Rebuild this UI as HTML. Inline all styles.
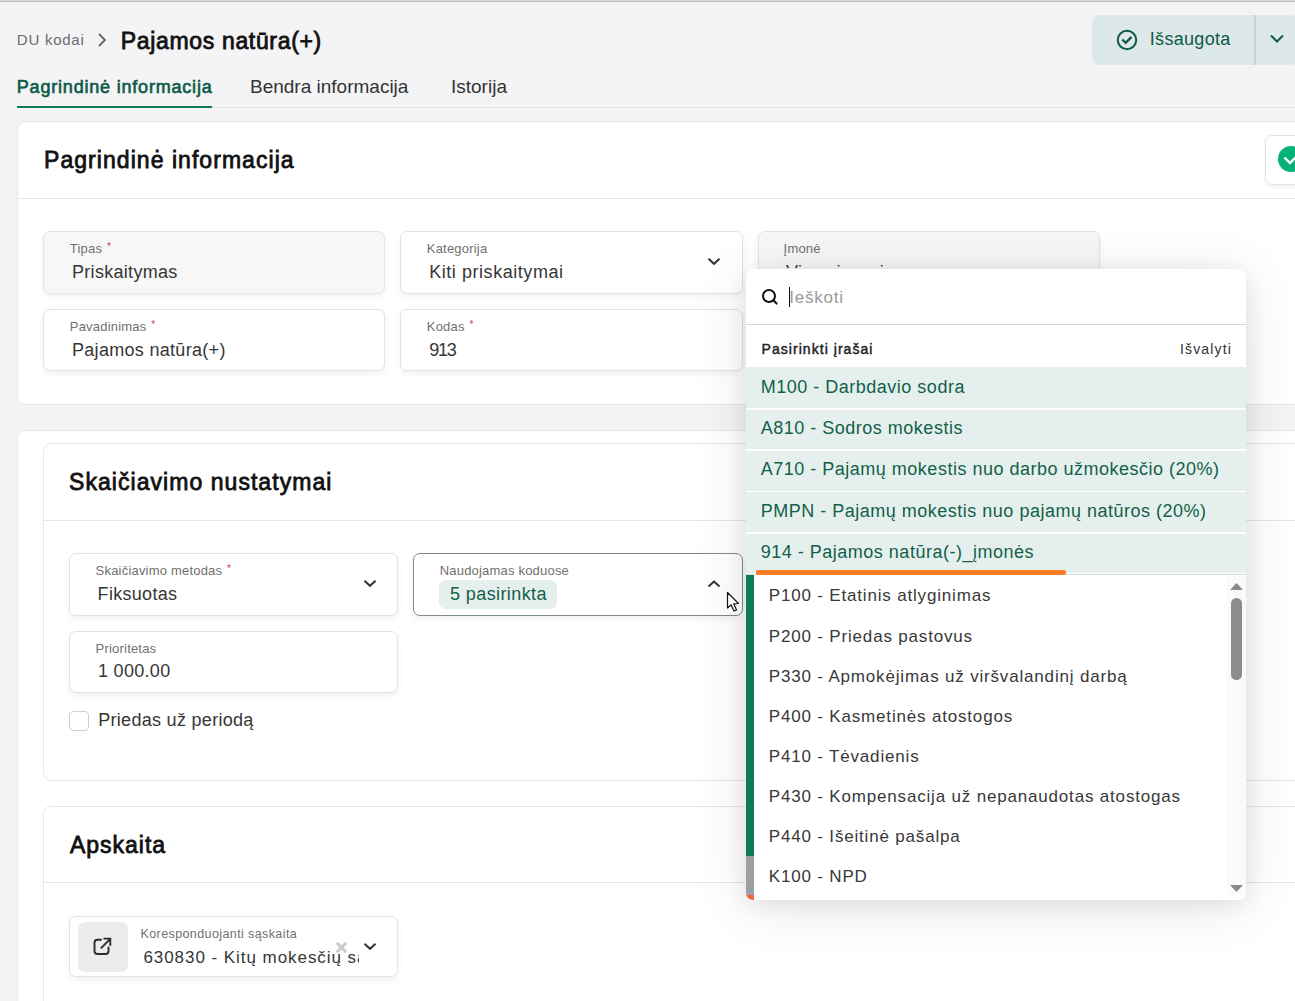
<!DOCTYPE html>
<html><head><meta charset="utf-8">
<style>
*{box-sizing:border-box;margin:0;padding:0}
html,body{width:1295px;height:1001px;overflow:hidden}
body{background:#f4f4f6;font-family:"Liberation Sans",sans-serif;position:relative;color:#2d2d2d}
.a{position:absolute}
.t{position:absolute;white-space:nowrap;line-height:1}
.card{position:absolute;background:#fff;border:1px solid #e7e7ea;border-radius:8px}
.hr{position:absolute;height:1px;background:#e7e7ea}
.fld{position:absolute;background:#fff;border:1px solid #e3e3e3;border-radius:7px;box-shadow:0 3px 6px rgba(0,0,0,0.06)}
.fld.dis{background:#f7f7f7}
.lbl{font-size:13px;color:#707070;letter-spacing:0.2px}
.val{font-size:18px;color:#363636;letter-spacing:0.3px}
.req{color:#e0325a;font-size:10px;position:relative;top:-3px;left:1px}
.ttl{font-size:23px;color:#111;-webkit-text-stroke:0.8px #111}
.sel{position:absolute;left:746px;width:500px;height:40px;background:#e5f0ee}
.selt{font-size:18px;color:#135f48;letter-spacing:0.5px}
.it{font-size:17px;color:#383838;letter-spacing:0.82px}
</style></head><body>
<!-- top line -->
<div class="a" style="left:0;top:0;width:1295px;height:1px;background:#dcdcde"></div>
<div class="a" style="left:0;top:1px;width:1295px;height:1px;background:#bdbdbf"></div>

<!-- breadcrumb -->
<div class="t" style="left:16.8px;top:32.3px;font-size:15px;color:#6b6b6b;letter-spacing:0.75px">DU kodai</div>
<svg class="a" style="left:96px;top:32px" width="12" height="16" viewBox="0 0 12 16"><path d="M3 2 L9 8 L3 14" fill="none" stroke="#666" stroke-width="1.8"/></svg>
<div class="t ttl" style="left:120.8px;top:30px;letter-spacing:0.66px">Pajamos natūra(+)</div>

<!-- save button -->
<div class="a" style="left:1092px;top:15px;width:206px;height:50px;background:#dde9e8;border-radius:7px"></div>
<div class="a" style="left:1254px;top:15px;width:2px;height:50px;background:#c3d8d2"></div>
<svg class="a" style="left:1116px;top:29px" width="22" height="22" viewBox="0 0 22 22"><circle cx="11" cy="11" r="9.2" fill="none" stroke="#0e5a45" stroke-width="2"/><path d="M6.3 10.5 L9.7 13.9 L15.5 7.9" fill="none" stroke="#0e5a45" stroke-width="2.3"/></svg>
<div class="t" style="left:1149.8px;top:30.1px;font-size:18px;color:#0e5a45;letter-spacing:0.3px">Išsaugota</div>
<svg class="a" style="left:1269px;top:33px" width="16" height="12" viewBox="0 0 16 12"><path d="M2 2.5 L8 8.5 L14 2.5" fill="none" stroke="#0e5a45" stroke-width="2"/></svg>

<!-- tabs -->
<div class="a" style="left:17px;top:107px;width:1278px;height:1px;background:#e2e2e4"></div>
<div class="t" style="left:16.8px;top:77.6px;font-size:18px;color:#0f5b48;-webkit-text-stroke:0.65px #0f5b48;letter-spacing:0.8px">Pagrindinė informacija</div>
<div class="a" style="left:17px;top:106px;width:195px;height:2px;background:#137a5a"></div>
<div class="t" style="left:250px;top:77px;font-size:19px;color:#333">Bendra informacija</div>
<div class="t" style="left:451px;top:77px;font-size:19px;color:#333">Istorija</div>

<!-- card 1 -->
<div class="card" style="left:17px;top:121px;width:1300px;height:284px"></div>
<div class="t ttl" style="left:44px;top:149.1px;letter-spacing:1.05px">Pagrindinė informacija</div>
<div class="hr" style="left:18px;top:198px;width:1277px"></div>
<div class="a" style="left:1265px;top:135px;width:40px;height:50px;border:1px solid #e3e3e3;border-radius:7px;background:#fff;box-shadow:0 2px 4px rgba(0,0,0,0.05)"></div>
<svg class="a" style="left:1278px;top:146px" width="26" height="26" viewBox="0 0 26 26"><circle cx="13" cy="13" r="13" fill="#05b174"/><path d="M6.5 11.5 L12 17 L18 11" fill="none" stroke="#fff" stroke-width="2.4"/></svg>

<div class="fld dis" style="left:43px;top:231px;width:342px;height:63px"></div>
<div class="t lbl" style="left:69.8px;top:242.3px">Tipas <span class="req">*</span></div>
<div class="t val" style="left:72px;top:263.1px">Priskaitymas</div>

<div class="fld" style="left:400px;top:231px;width:343px;height:63px"></div>
<div class="t lbl" style="left:426.8px;top:242.3px">Kategorija</div>
<div class="t val" style="left:429.2px;top:263.1px;letter-spacing:0.55px">Kiti priskaitymai</div>
<svg class="a" style="left:706px;top:255px" width="16" height="12" viewBox="0 0 16 12"><path d="M2.5 3.8 L8 8.8 L13.5 3.8" fill="none" stroke="#333" stroke-width="2"/></svg>

<div class="fld dis" style="left:758px;top:231px;width:342px;height:63px"></div>
<div class="t lbl" style="left:783.6px;top:242.3px">Įmonė</div>
<div class="a" style="left:780px;top:255px;width:200px;height:13.2px;overflow:hidden"><div class="t val" style="left:6px;top:8.1px">Visos įmonės</div></div>

<div class="fld" style="left:43px;top:309px;width:342px;height:62px"></div>
<div class="t lbl" style="left:69.8px;top:320.3px">Pavadinimas <span class="req">*</span></div>
<div class="t val" style="left:72px;top:341.1px">Pajamos natūra(+)</div>

<div class="fld" style="left:400px;top:309px;width:343px;height:62px"></div>
<div class="t lbl" style="left:426.8px;top:320.3px">Kodas <span class="req">*</span></div>
<div class="t val" style="left:429.2px;top:341.1px;letter-spacing:-1.2px">913</div>

<!-- card 2 -->
<div class="card" style="left:17px;top:430px;width:1300px;height:700px"></div>
<div class="card" style="left:43px;top:443px;width:1300px;height:338px"></div>
<div class="t ttl" style="left:69px;top:470.5px;letter-spacing:1.05px">Skaičiavimo nustatymai</div>
<div class="hr" style="left:44px;top:520px;width:1251px"></div>

<div class="fld" style="left:69px;top:553px;width:329px;height:63px"></div>
<div class="t lbl" style="left:95.6px;top:563.7px">Skaičiavimo metodas <span class="req">*</span></div>
<div class="t val" style="left:97.6px;top:584.8px">Fiksuotas</div>
<svg class="a" style="left:362px;top:577px" width="16" height="12" viewBox="0 0 16 12"><path d="M2.5 3.8 L8 8.8 L13.5 3.8" fill="none" stroke="#333" stroke-width="2"/></svg>

<div class="fld" style="left:413px;top:553px;width:330px;height:63px;border-color:#7d8b90"></div>
<div class="t lbl" style="left:439.7px;top:563.7px">Naudojamas koduose</div>
<div class="a" style="left:439px;top:580px;width:118px;height:29px;background:#e5f0ee;border-radius:7px"></div>
<div class="t val" style="left:450px;top:584.6px;color:#135f48;letter-spacing:0.4px">5 pasirinkta</div>
<svg class="a" style="left:706px;top:578px" width="16" height="12" viewBox="0 0 16 12"><path d="M2.5 8.6 L8 3.6 L13.5 8.6" fill="none" stroke="#333" stroke-width="2"/></svg>

<div class="fld" style="left:69px;top:631px;width:329px;height:62px"></div>
<div class="t lbl" style="left:95.6px;top:641.9px">Prioritetas</div>
<div class="t val" style="left:98px;top:662.2px">1 000.00</div>

<div class="a" style="left:69px;top:711px;width:20px;height:20px;border:1px solid #d0d0d0;border-radius:4px;background:#fff"></div>
<div class="t val" style="left:98.2px;top:711.1px">Priedas už periodą</div>

<div class="card" style="left:43px;top:806px;width:1300px;height:300px"></div>
<div class="t ttl" style="left:70px;top:833.5px;letter-spacing:0.98px">Apskaita</div>
<div class="hr" style="left:44px;top:882px;width:1251px"></div>

<div class="fld" style="left:69px;top:916px;width:329px;height:61px"></div>
<div class="a" style="left:78px;top:922px;width:50px;height:50px;background:#ececec;border-radius:7px"></div>
<svg class="a" style="left:85px;top:930px" width="35" height="35" viewBox="0 0 35 35"><path d="M16 9.8 H12.5 A3 3 0 0 0 9.5 12.8 V21 A3 3 0 0 0 12.5 24 H20.5 A3 3 0 0 0 23.5 21 V17.5" fill="none" stroke="#2a2d2e" stroke-width="1.9" stroke-linecap="round"/><path d="M15.8 18.3 L25.3 8.8 M18.5 8.6 H25.3 V15.8" fill="none" stroke="#2a2d2e" stroke-width="1.9" stroke-linecap="butt"/></svg>
<div class="t lbl" style="left:140.5px;top:927.5px;font-size:12.5px;letter-spacing:0.4px">Koresponduojanti sąskaita</div>
<div class="a" style="left:143px;top:940px;width:216px;height:30px;overflow:hidden"><div class="t val" style="left:0.4px;top:9.1px;font-size:17px;letter-spacing:0.95px">630830 - Kitų mokesčių sąskaita</div></div>
<svg class="a" style="left:335px;top:941px" width="13" height="13" viewBox="0 0 13 13"><path d="M1.8 1.8 L11.2 11.2 M11.2 1.8 L1.8 11.2" stroke="#c9cdd0" stroke-width="3.1"/></svg>
<svg class="a" style="left:362px;top:940px" width="16" height="12" viewBox="0 0 16 12"><path d="M2.5 3.8 L8 8.8 L13.5 3.8" fill="none" stroke="#333" stroke-width="2"/></svg>

<!-- dropdown -->
<div class="a" style="left:746px;top:269px;width:500px;height:631px;background:#fff;border-radius:7px;box-shadow:0 4px 20px rgba(0,0,0,0.07),0 6px 56px rgba(0,0,0,0.11);overflow:hidden">
</div>
<svg class="a" style="left:761px;top:288px" width="18" height="18" viewBox="0 0 18 18"><circle cx="8" cy="8" r="6" fill="none" stroke="#111" stroke-width="2"/><path d="M12.3 12.3 L15.6 15.6" stroke="#111" stroke-width="2.1" stroke-linecap="round"/></svg>
<div class="a" style="left:789px;top:287px;width:1px;height:20px;background:#111"></div>
<div class="t" style="left:789.3px;top:289.1px;font-size:17px;color:#9a9a9a;letter-spacing:0.75px">Ieškoti</div>
<div class="a" style="left:746px;top:324px;width:500px;height:1px;background:#ccd5d9"></div>
<div class="t" style="left:761.5px;top:341.8px;font-size:14px;color:#222;-webkit-text-stroke:0.45px #222;letter-spacing:1.05px">Pasirinkti įrašai</div>
<div class="t" style="left:1180px;top:341.7px;font-size:14px;color:#333;letter-spacing:1.15px">Išvalyti</div>

<div class="sel" style="top:367px;height:41px"></div>
<div class="sel" style="top:409.5px;height:39.5px"></div>
<div class="sel" style="top:450.5px;height:40px"></div>
<div class="sel" style="top:492px;height:40px"></div>
<div class="sel" style="top:533.5px;height:39.5px"></div>
<div class="t selt" style="left:760.8px;top:377.8px">M100 - Darbdavio sodra</div>
<div class="t selt" style="left:760.8px;top:419.1px">A810 - Sodros mokestis</div>
<div class="t selt" style="left:760.8px;top:460.4px">A710 - Pajamų mokestis nuo darbo užmokesčio (20%)</div>
<div class="t selt" style="left:760.8px;top:501.7px">PMPN - Pajamų mokestis nuo pajamų natūros (20%)</div>
<div class="t selt" style="left:760.8px;top:543px">914 - Pajamos natūra(-)_įmonės</div>

<div class="a" style="left:746px;top:574px;width:500px;height:1px;background:#d3dcdf"></div>
<div class="a" style="left:756px;top:570px;width:310px;height:4.8px;background:#fc7d23;border-radius:1.8px"></div>

<!-- list -->
<div class="a" style="left:746px;top:575px;width:8px;height:325px;overflow:hidden;border-bottom-left-radius:7px">
  <div class="a" style="left:0;top:0;width:8px;height:281px;background:#0e7b5a"></div>
  <div class="a" style="left:0;top:281px;width:8px;height:39px;background:#9ba0a5"></div>
  <div class="a" style="left:0;top:320px;width:8px;height:5px;background:#ee6a3a"></div>
</div>
<div class="t it" style="left:768.8px;top:587.4px">P100 - Etatinis atlyginimas</div>
<div class="t it" style="left:768.8px;top:627.5px">P200 - Priedas pastovus</div>
<div class="t it" style="left:768.8px;top:667.7px">P330 - Apmokėjimas už viršvalandinį darbą</div>
<div class="t it" style="left:768.8px;top:707.8px">P400 - Kasmetinės atostogos</div>
<div class="t it" style="left:768.8px;top:748.0px">P410 - Tėvadienis</div>
<div class="t it" style="left:768.8px;top:788.1px">P430 - Kompensacija už nepanaudotas atostogas</div>
<div class="t it" style="left:768.8px;top:828.2px">P440 - Išeitinė pašalpa</div>
<div class="t it" style="left:768.8px;top:868.4px">K100 - NPD</div>

<!-- scrollbar -->
<div class="a" style="left:1227px;top:576px;width:19px;height:319px;background:#fafafa"></div>
<svg class="a" style="left:1229px;top:582px" width="15" height="9" viewBox="0 0 15 9"><path d="M1 8 L7.5 1 L14 8 Z" fill="#8a8a8a"/></svg>
<div class="a" style="left:1231px;top:598px;width:11px;height:82px;background:#8c8c8c;border-radius:6px"></div>
<svg class="a" style="left:1229px;top:884px" width="15" height="9" viewBox="0 0 15 9"><path d="M1 1 L7.5 8 L14 1 Z" fill="#8a8a8a"/></svg>

<!-- cursor -->
<svg class="a" style="left:726px;top:591px" width="16" height="22" viewBox="0 0 16 22"><path d="M1.5 1.5 L1.5 17 L5 13.8 L8 20 L10.5 19 L7.7 12.8 L12.5 12.5 Z" fill="#fff" stroke="#111" stroke-width="1.2" stroke-linejoin="round"/></svg>
</body></html>
